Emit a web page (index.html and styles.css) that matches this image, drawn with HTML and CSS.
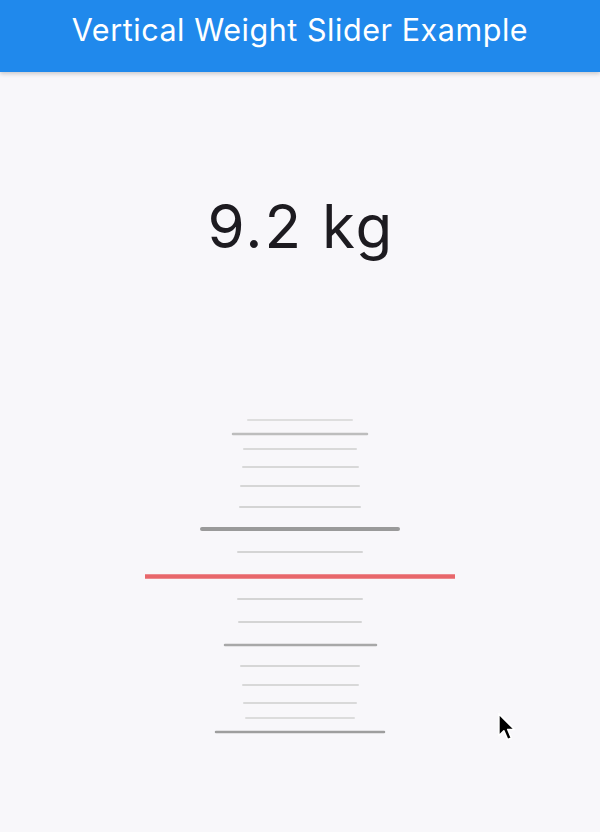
FILE: index.html
```html
<!DOCTYPE html>
<html>
<head>
<meta charset="utf-8">
<link rel="stylesheet" href="styles.css">
</head>
<body>
<div class="app">
  <header class="appbar"><h1 class="title">Vertical Weight Slider Example</h1></header>
  <main class="content">
    <div class="value">9.2 kg</div>
    <svg class="slider" width="600" height="360" viewBox="0 400 600 360">
      <g stroke-linecap="round" fill="none">
        <line x1="248" y1="420" x2="352" y2="420" stroke="#dedede" stroke-width="2"/>
        <line x1="233" y1="434" x2="367" y2="434" stroke="#bdbdbd" stroke-width="2.5"/>
        <line x1="244" y1="449" x2="356" y2="449" stroke="#d9d9d9" stroke-width="2"/>
        <line x1="243" y1="467" x2="358" y2="467" stroke="#d8d8d8" stroke-width="2"/>
        <line x1="241" y1="486" x2="359" y2="486" stroke="#d6d6d6" stroke-width="2"/>
        <line x1="240" y1="507" x2="360" y2="507" stroke="#d4d4d4" stroke-width="2"/>
        <line x1="202" y1="529" x2="398" y2="529" stroke="#9a9a9a" stroke-width="4"/>
        <line x1="238" y1="552" x2="362" y2="552" stroke="#d4d4d4" stroke-width="2"/>
        <line x1="145" y1="576.5" x2="455" y2="576.5" stroke="#e8676b" stroke-width="4.5" stroke-linecap="butt"/>
        <line x1="238" y1="599" x2="362" y2="599" stroke="#d4d4d4" stroke-width="2"/>
        <line x1="239" y1="622" x2="361" y2="622" stroke="#d4d4d4" stroke-width="2"/>
        <line x1="225" y1="645" x2="376" y2="645" stroke="#a8a8a8" stroke-width="2.5"/>
        <line x1="241" y1="666" x2="359" y2="666" stroke="#d6d6d6" stroke-width="2"/>
        <line x1="243" y1="685" x2="358" y2="685" stroke="#d8d8d8" stroke-width="2"/>
        <line x1="244" y1="703" x2="356" y2="703" stroke="#d9d9d9" stroke-width="2"/>
        <line x1="246" y1="718" x2="354" y2="718" stroke="#dcdcdc" stroke-width="2"/>
        <line x1="216" y1="732" x2="384" y2="732" stroke="#9e9e9e" stroke-width="2.5"/>
      </g>
    </svg>
    <svg class="cursor" width="20" height="30" viewBox="0 0 16 24">
      <path d="M1.5 1.5 L1.5 19 L5.5 15 L8.5 22 L11.5 20.8 L8.6 14 L14 14 Z" fill="#000" stroke="#fff" stroke-width="1.3" stroke-linejoin="round"/>
    </svg>
  </main>
</div>
</body>
</html>
```
FILE: styles.css
```css
html, body {
  margin: 0;
  padding: 0;
  background: #f8f7fa;
}
.app {
  width: 600px;
  height: 832px;
  display: flex;
  flex-direction: column;
  font-family: Inter, Roboto, "Liberation Sans", sans-serif;
  overflow: hidden;
}
.appbar {
  height: 72px;
  flex: 0 0 72px;
  box-sizing: border-box;
  padding-bottom: 14px;
  background: #2089ec;
  display: flex;
  align-items: center;
  justify-content: center;
  box-shadow: 0 2px 4px rgba(0,0,0,0.18);
  position: relative;
  z-index: 1;
}
.title {
  margin: 0;
  color: #ffffff;
  font-weight: 400;
  font-size: 30.5px;
  letter-spacing: 0.55px;
}
.content {
  position: relative;
  flex: 1;
  display: flex;
  flex-direction: column;
  align-items: center;
}
.value {
  margin-top: 118px;
  height: 72px;
  line-height: 72px;
  font-size: 60px;
  letter-spacing: 2px;
  text-indent: 2px;
  color: #1d1b20;
}
.slider {
  display: block;
  margin-top: 138px;
}
.cursor {
  position: absolute;
  left: 497px;
  top: 640px;
}
```
